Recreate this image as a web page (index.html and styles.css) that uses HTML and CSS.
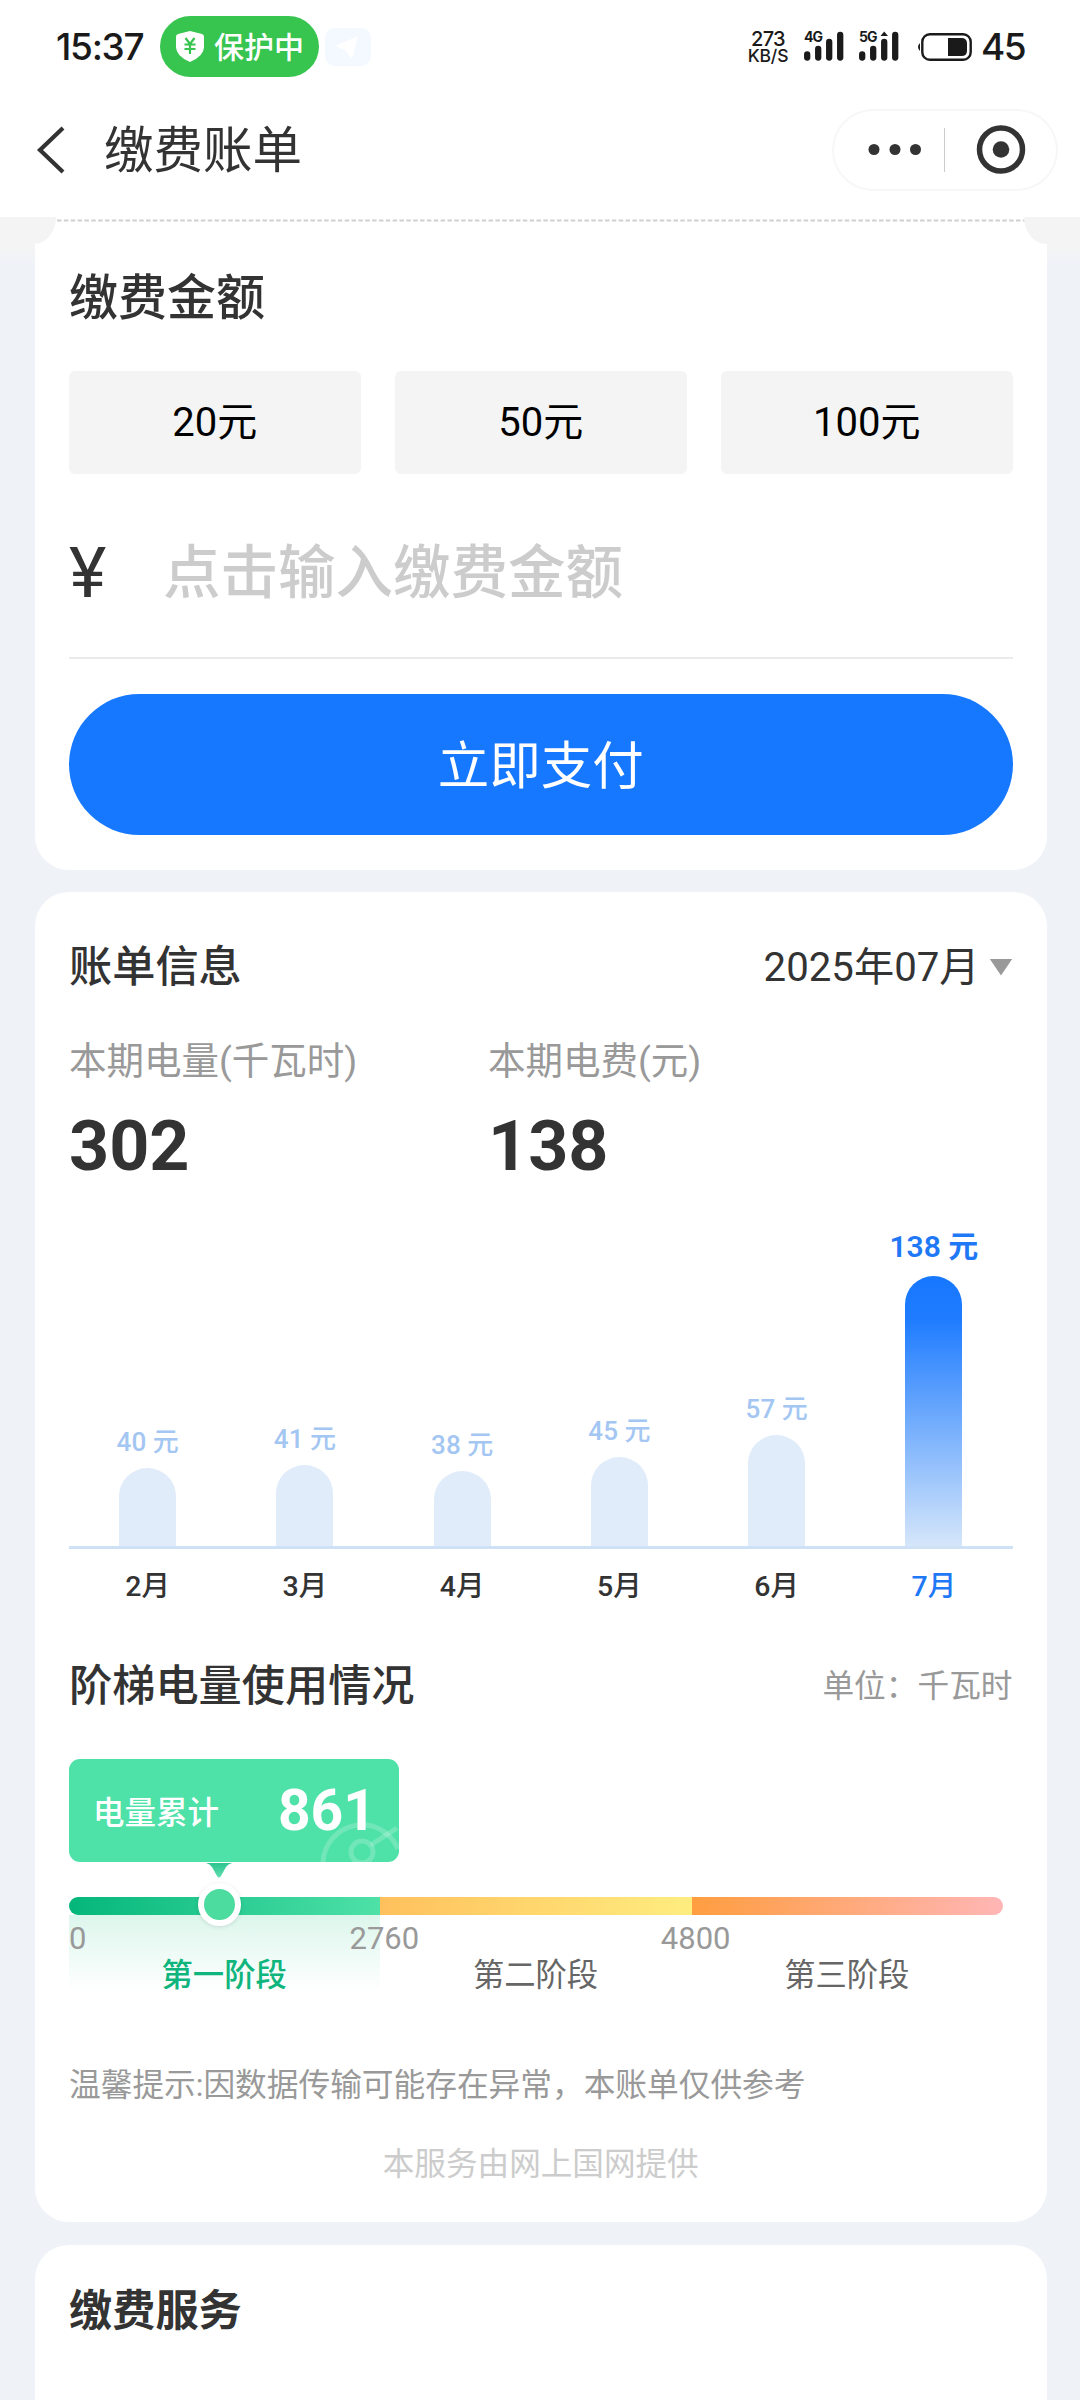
FILE: index.html
```html
<!DOCTYPE html>
<html lang="zh-CN">
<head>
<meta charset="utf-8">
<title>缴费账单</title>
<link rel="stylesheet" href="styles.css">
</head>
<body>
<div class="page">
  <header class="status">
    <span class="clock">15:37</span>
    <span class="guard">
      <svg class="shield" width="28" height="31" viewBox="0 0 28 31"><path d="M14 0 L26 3 Q28 3.5 28 5.500 V16 Q28 25 14 31 Q0 25 0 16 V5.500 Q0 3.500 2 3Z" fill="#fff"/><path d="M9.500 7 L14 13 L18.500 7 M14 13 V23 M8.500 13.500 H19.500 M8.500 18 H19.500" fill="none" stroke="#37c44f" stroke-width="2.200"/></svg>
      <span class="guard-text">保护中</span>
    </span>
    <svg class="plane" width="46" height="38" viewBox="0 0 46 38"><rect width="46" height="38" rx="10" fill="#f4f8ff"/><path d="M33 8 L10 18 L20 22 L27 31Z" fill="#fff"/></svg>
    <span class="speed"><span>273</span><span>KB/S</span></span>
    <svg class="signal" width="40" height="34" viewBox="0 0 40 34"><text x="0" y="12" class="net">4G</text><g stroke="#1a1a1a" stroke-width="6.300" stroke-linecap="round"><path d="M3.200 24.500V27.500M14.200 19V27.500M25.200 12V27.500M36.200 5V27.500"/></g></svg>
    <svg class="signal second" width="40" height="34" viewBox="0 0 40 34"><text x="0" y="12" class="net">5G</text><g stroke="#1a1a1a" stroke-width="6.300" stroke-linecap="round"><path d="M3.200 24.500V27.500M14.200 19V27.500M25.200 12V27.500M36.200 5V27.500"/></g><path d="M21.500 6L25.200 1.500L29 6Z" fill="#1a1a1a"/></svg>
    <svg class="battery" width="57" height="28" viewBox="0 0 57 28"><path d="M4 10 Q0 14 4 18Z" fill="#1a1a1a"/><rect x="6.300" y="1.300" width="48.400" height="25.400" rx="7.500" fill="none" stroke="#1a1a1a" stroke-width="2.400"/><path d="M32 5H45.500Q51 5 51 10.500V17.500Q51 23 45.500 23H32Z" fill="#1a1a1a"/></svg>
    <span class="percent">45</span>
  </header>

  <nav class="nav">
    <svg width="30" height="48" viewBox="0 0 30 48"><path d="M27 2 L4 24 L27 46" fill="none" stroke="#333" stroke-width="4.200"/></svg>
    <h1 class="nav-title">缴费账单</h1>
    <div class="capsule">
      <svg width="225" height="82" viewBox="0 0 225 82"><g fill="#333"><circle cx="42" cy="40.500" r="5.500"/><circle cx="63" cy="40.500" r="5.500"/><circle cx="83.500" cy="40.500" r="5.500"/><circle cx="169" cy="40.500" r="8.300"/></g><path d="M112.500 19V63" stroke="#ccc"/><circle cx="169" cy="40.500" r="21.500" fill="none" stroke="#333" stroke-width="5.500"/></svg>
    </div>
  </nav>

  <main class="content">
    <div class="notch notch-left"></div>
    <div class="notch notch-right"></div>

    <section class="card pay">
      <svg class="tear" width="968" height="3" viewBox="0 0 968 3"><path d="M0 1.500H968" stroke="#d0d0d0" stroke-width="2" stroke-dasharray="4.500 2.350"/></svg>
      <h2 class="pay-title">缴费金额</h2>
      <div class="amounts">
        <button class="amount">20元</button>
        <button class="amount">50元</button>
        <button class="amount">100元</button>
      </div>
      <div class="entry"><span class="yen">¥</span><span class="hint">点击输入缴费金额</span></div>
      <button class="submit">立即支付</button>
    </section>

    <section class="card bill">
      <div class="head">
        <h2 class="title">账单信息</h2>
        <span class="month"><span class="month-text">2025年07月</span><i class="caret"></i></span>
      </div>
      <div class="stats">
        <div class="stat"><span class="label">本期电量(千瓦时)</span><strong class="value">302</strong></div>
        <div class="stat"><span class="label">本期电费(元)</span><strong class="value">138</strong></div>
      </div>
      <div class="chart">
        <div class="col"><span class="fee">40 元</span><i class="bar" style="height:78px"></i></div>
        <div class="col"><span class="fee">41 元</span><i class="bar" style="height:81px"></i></div>
        <div class="col"><span class="fee">38 元</span><i class="bar" style="height:75px"></i></div>
        <div class="col"><span class="fee">45 元</span><i class="bar" style="height:89px"></i></div>
        <div class="col"><span class="fee">57 元</span><i class="bar" style="height:111px"></i></div>
        <div class="col now"><span class="fee">138 元</span><i class="bar" style="height:270px"></i></div>
      </div>
      <div class="months">
        <span>2月</span><span>3月</span><span>4月</span><span>5月</span><span>6月</span><span class="current">7月</span>
      </div>
      <div class="head tier-head">
        <h2 class="title">阶梯电量使用情况</h2>
        <span class="unit">单位：千瓦时</span>
      </div>
      <div class="total">
        <span class="total-label">电量累计</span><strong class="total-value">861</strong>
        <svg class="gauge" width="80" height="42" viewBox="0 0 80 42"><g fill="none" stroke="#fff" stroke-opacity=".2" stroke-width="5"><path d="M4 42 A39 39 0 0 1 79 29"/><circle cx="43" cy="32" r="11"/><path d="M52 25 L78 8"/></g></svg>
      </div>
      <svg class="pointer" width="26" height="15" viewBox="0 0 26 15"><defs><linearGradient id="tip" x2="0" y2="1"><stop stop-color="#2fc48f"/><stop offset="1" stop-color="#5edfb0"/></linearGradient></defs><path d="M0 0H26Q22 1 20 4L15 13Q13 16 11 13L6 4Q4 1 0 0Z" fill="url(#tip)"/></svg>
      <div class="tiers">
        <div class="tier t1"><i class="track"></i><span class="zone"><span class="from">0</span><span class="to">2760</span><b class="stage">第一阶段</b></span></div>
        <div class="tier t2"><i class="track"></i><span class="zone"><span class="to">4800</span><span class="stage">第二阶段</span></span></div>
        <div class="tier t3"><i class="track"></i><span class="zone"><span class="stage">第三阶段</span></span></div>
        <i class="knob"></i>
      </div>
      <p class="note">温馨提示:因数据传输可能存在异常，本账单仅供参考</p>
      <p class="source">本服务由网上国网提供</p>
    </section>

    <section class="card service"><h2 class="title strong">缴费服务</h2></section>
  </main>
</div>
</body>
</html>
```
FILE: styles.css
```css
* { box-sizing: border-box; margin: 0; padding: 0; }
body {
  font-family: Roboto, "Noto Sans CJK SC", sans-serif;
  color: #333;
  background: #eff3f8;
}
svg { display: block; flex: none; }
i { display: block; font-style: normal; }
button { border: 0; font: inherit; }
.page { width: 1080px; height: 2400px; overflow: hidden; display: flex; flex-direction: column; }

/* status bar */
.status {
  height: 93px; flex: none; background: #fff; color: #1a1a1a;
  display: flex; align-items: center; padding-left: 56px;
  font-family: Inter, "Noto Sans CJK SC", sans-serif;
}
.clock { width: 104px; font-size: 37px; font-weight: 500; line-height: 60px; letter-spacing: -1.3px; white-space: nowrap; }
.guard { width: 159px; height: 61px; border-radius: 31px; background: #37c44f; display: flex; align-items: center; gap: 10px; padding-left: 16px; }
.guard-text { color: #fff; font: 500 30px/44px "Noto Sans CJK SC", sans-serif; padding-bottom: 4px; }
.plane { margin-left: 6px; }
.speed { margin-left: 376px; width: 42px; display: flex; flex-direction: column; align-items: center; font-size: 20px; font-weight: 500; line-height: 18px; white-space: nowrap; letter-spacing: -.6px; }
.speed span:last-child { font-size: 17.500px; line-height: 16px; letter-spacing: -.2px; }
.signal { margin-left: 15px; }
.net { font: 700 14px Inter, sans-serif; letter-spacing: -1px; fill: #1a1a1a; }
.battery { margin-left: 17px; }
.percent { margin-left: 8px; font-size: 37px; font-weight: 500; letter-spacing: -1.5px; }

/* navigation */
.nav { height: 124px; flex: none; background: #fff; display: flex; align-items: center; padding: 0 22px 10px 36px; }
.nav-title { margin-left: 38px; flex: 1; font-size: 49.500px; font-weight: 400; line-height: 70px; padding-top: 2px; }
.capsule { width: 226px; height: 82px; border-radius: 41px; box-shadow: inset 0 0 0 2px #f7f7f7; }

/* cards */
.content { position: relative; flex: 1; padding: 0 33px 0 35px; display: flex; flex-direction: column; gap: 22px; background: linear-gradient(#f4f4f4 0, #f4f4f4 30px, #eff3f8 46px); }
.notch { position: absolute; top: 0; width: 56px; height: 27px; background: #f4f4f4; z-index: 1; }
.notch-left { left: 0; border-bottom-right-radius: 22px 27px; }
.notch-right { right: 0; border-bottom-left-radius: 22px 27px; }
.card { flex: none; background: #fff; border-radius: 34px; padding: 0 34.500px 0 34px; display: flex; flex-direction: column; }
.pay { height: 653px; border-radius: 0 0 34px 34px; }
.tear { margin: 2px 0 0 -12px; }
.pay-title { margin-top: 42px; font-size: 49px; font-weight: 500; line-height: 70px; }
.amounts { margin-top: 37px; display: grid; grid-template-columns: repeat(3, 1fr); gap: 34.500px; }
.amount { height: 103px; border-radius: 6px; background: #f4f4f4; color: #000; font-size: 40px; padding-bottom: 7px; }
.entry { height: 185px; display: flex; align-items: center; padding-top: 15px; border-bottom: 2px solid #ebebeb; }
.yen { width: 94px; font-size: 71px; padding-bottom: 2px; }
.hint { font-size: 57.500px; font-weight: 500; color: #ccc; line-height: 80px; padding-top: 2px; }
.submit { margin-top: 35px; height: 141px; border-radius: 71px; background: #1677ff; color: #fff; font-size: 51.500px; padding-bottom: 6px; }

.bill { height: 1330px; }
.head { height: 60px; margin-top: 45px; display: flex; justify-content: space-between; align-items: center; }
.title { font-size: 43.200px; font-weight: 500; line-height: 60px; padding-top: 1px; }
.strong { font-weight: 700; }
.month { display: flex; align-items: center; gap: 10px; font-size: 40.200px; }
.month-text { padding-bottom: 8px; }
.caret { width: 23px; height: 17px; background: #999; clip-path: polygon(0 0, 100% 0, 50% 100%); }
.stats { margin-top: 37px; display: grid; grid-template-columns: 419px 1fr; }
.stat { display: flex; flex-direction: column; }
.label { font-size: 37.500px; line-height: 54px; color: #999; }
.value { font-size: 70px; font-weight: 700; line-height: 80px; margin-top: 18px; }
.chart { height: 363px; display: grid; grid-template-columns: repeat(6, 1fr); border-bottom: 3px solid #cfe1f6; }
.col { display: flex; flex-direction: column; align-items: center; justify-content: flex-end; }
.fee { font-size: 26px; font-weight: 500; line-height: 36px; margin-bottom: 8px; color: #a3c6f2; }
.bar { width: 57px; border-radius: 29px 29px 0 0; background: #e1ecfa; }
.now .fee { color: #1f78f5; font-size: 30px; font-weight: 600; margin-bottom: 11px; }
.now .bar { background: linear-gradient(#1677ff 0, #1f7cff 16%, #d5e6fa 100%); }
.months { height: 76px; display: grid; grid-template-columns: repeat(6, 1fr); text-align: center; font-size: 28.500px; font-weight: 500; line-height: 76px; }
.current { color: #1f78f5; }
.tier-head { margin-top: 31px; }
.unit { font-size: 31.700px; color: #999; padding-bottom: 7px; }

/* tier usage */
.total { position: relative; width: 330px; height: 103px; margin-top: 43px; border-radius: 11px; background: #4ee1a8; color: #fff; overflow: hidden; display: flex; align-items: center; justify-content: space-between; padding: 0 23px 0 24px; }
.total-label { font-size: 31.500px; font-weight: 500; padding-bottom: 2px; }
.total-value { font-size: 57px; font-weight: 700; line-height: 70px; }
.gauge { position: absolute; right: 0; bottom: 0; }
.pointer { margin: 1px 0 0 137px; }
.tiers { position: relative; width: 934px; margin-top: 19px; display: grid; grid-template-columns: repeat(3, 1fr); }
.track { height: 18px; }
.t1 .track { border-radius: 9px 0 0 9px; background: linear-gradient(100deg, #04b67b, #4ee1a8); }
.t2 .track { background: linear-gradient(100deg, #ffc05c, #ffed80); }
.t3 .track { border-radius: 0 9px 9px 0; background: linear-gradient(100deg, #ff9d3f, #ffb6b6); }
.zone { position: relative; height: 76px; padding-right: 1px; display: flex; flex-direction: column; justify-content: flex-end; align-items: center; }
.t1 .zone { background: linear-gradient(#dcf6ec, #fff); }
.from, .to { position: absolute; top: 6px; font-size: 31px; line-height: 36px; color: #999; }
.from { left: 0; }
.to { right: 0; transform: translateX(calc(50% + 4px)); z-index: 1; }
.stage { font-size: 31.300px; line-height: 30px; color: #666; }
.t1 .stage { color: #0fb57c; font-weight: 500; }
.knob { position: absolute; left: 128.500px; top: -14px; width: 43px; height: 43px; border-radius: 50%; border: 6.500px solid #fff; background: #4cdc9f; box-shadow: 0 1px 4px rgba(0,0,0,.12); }
.note { margin-top: 73px; font-size: 31.700px; line-height: 44px; color: #999; }
.source { margin-top: 35px; text-align: center; font-size: 31.600px; line-height: 44px; color: #ccc; }
.service { height: 300px; padding-top: 36px; margin-top: 1px; }
```
